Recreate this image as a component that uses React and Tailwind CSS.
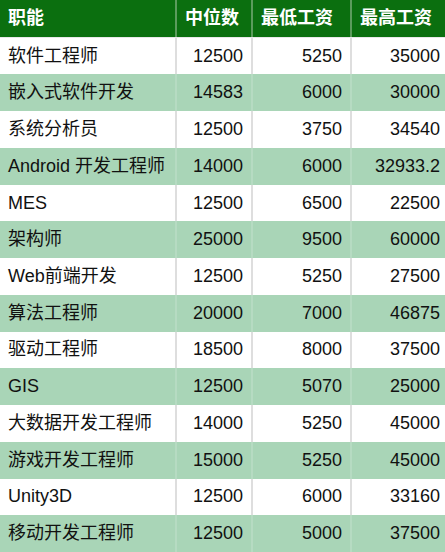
const rows = [
  ["软件工程师", "12500", "5250", "35000"],
  ["嵌入式软件开发", "14583", "6000", "30000"],
  ["系统分析员", "12500", "3750", "34540"],
  ["Android 开发工程师", "14000", "6000", "32933.2"],
  ["MES", "12500", "6500", "22500"],
  ["架构师", "25000", "9500", "60000"],
  ["Web前端开发", "12500", "5250", "27500"],
  ["算法工程师", "20000", "7000", "46875"],
  ["驱动工程师", "18500", "8000", "37500"],
  ["GIS", "12500", "5070", "25000"],
  ["大数据开发工程师", "14000", "5250", "45000"],
  ["游戏开发工程师", "15000", "5250", "45000"],
  ["Unity3D", "12500", "6000", "33160"],
  ["移动开发工程师", "12500", "5000", "37500"],
];

const cols = ["w-[177px]", "w-[76px]", "w-[99px]", "w-[96px]"];

export default function App() {
  return (
    <div
      className="w-[445px] h-[552px] overflow-hidden bg-white text-[18px] text-[#111]"
      style={{ fontFamily: '"Liberation Sans", "Noto Sans CJK SC", sans-serif' }}
    >
      <div className="w-[448px] h-full flex flex-col">
        <div className="flex-1 flex bg-[#0b6f0f] text-white font-bold border-b border-[#e8e8e8]">
          {["职能", "中位数", "最低工资", "最高工资"].map((h, i) => (
            <div
              key={h}
              className={`${cols[i]} flex items-center px-2 ${i < 3 ? "border-r-2 border-[#5c9c5c]" : ""}`}
            >
              {h}
            </div>
          ))}
        </div>
        {rows.map((r, ri) => {
          const green = ri % 2 === 1;
          return (
            <div
              key={r[0]}
              className={`flex-1 flex ${green ? "bg-[#a9d5b7]" : "bg-white"}`}
            >
              {r.map((c, i) => (
                <div
                  key={i}
                  className={`${cols[i]} flex items-center px-2 ${i > 0 ? "justify-end" : ""} ${
                    i < 3 ? (green ? "border-r-2 border-[#b6dbc2]" : "border-r-2 border-[#dedede]") : ""
                  }`}
                >
                  {c}
                </div>
              ))}
            </div>
          );
        })}
      </div>
    </div>
  );
}
